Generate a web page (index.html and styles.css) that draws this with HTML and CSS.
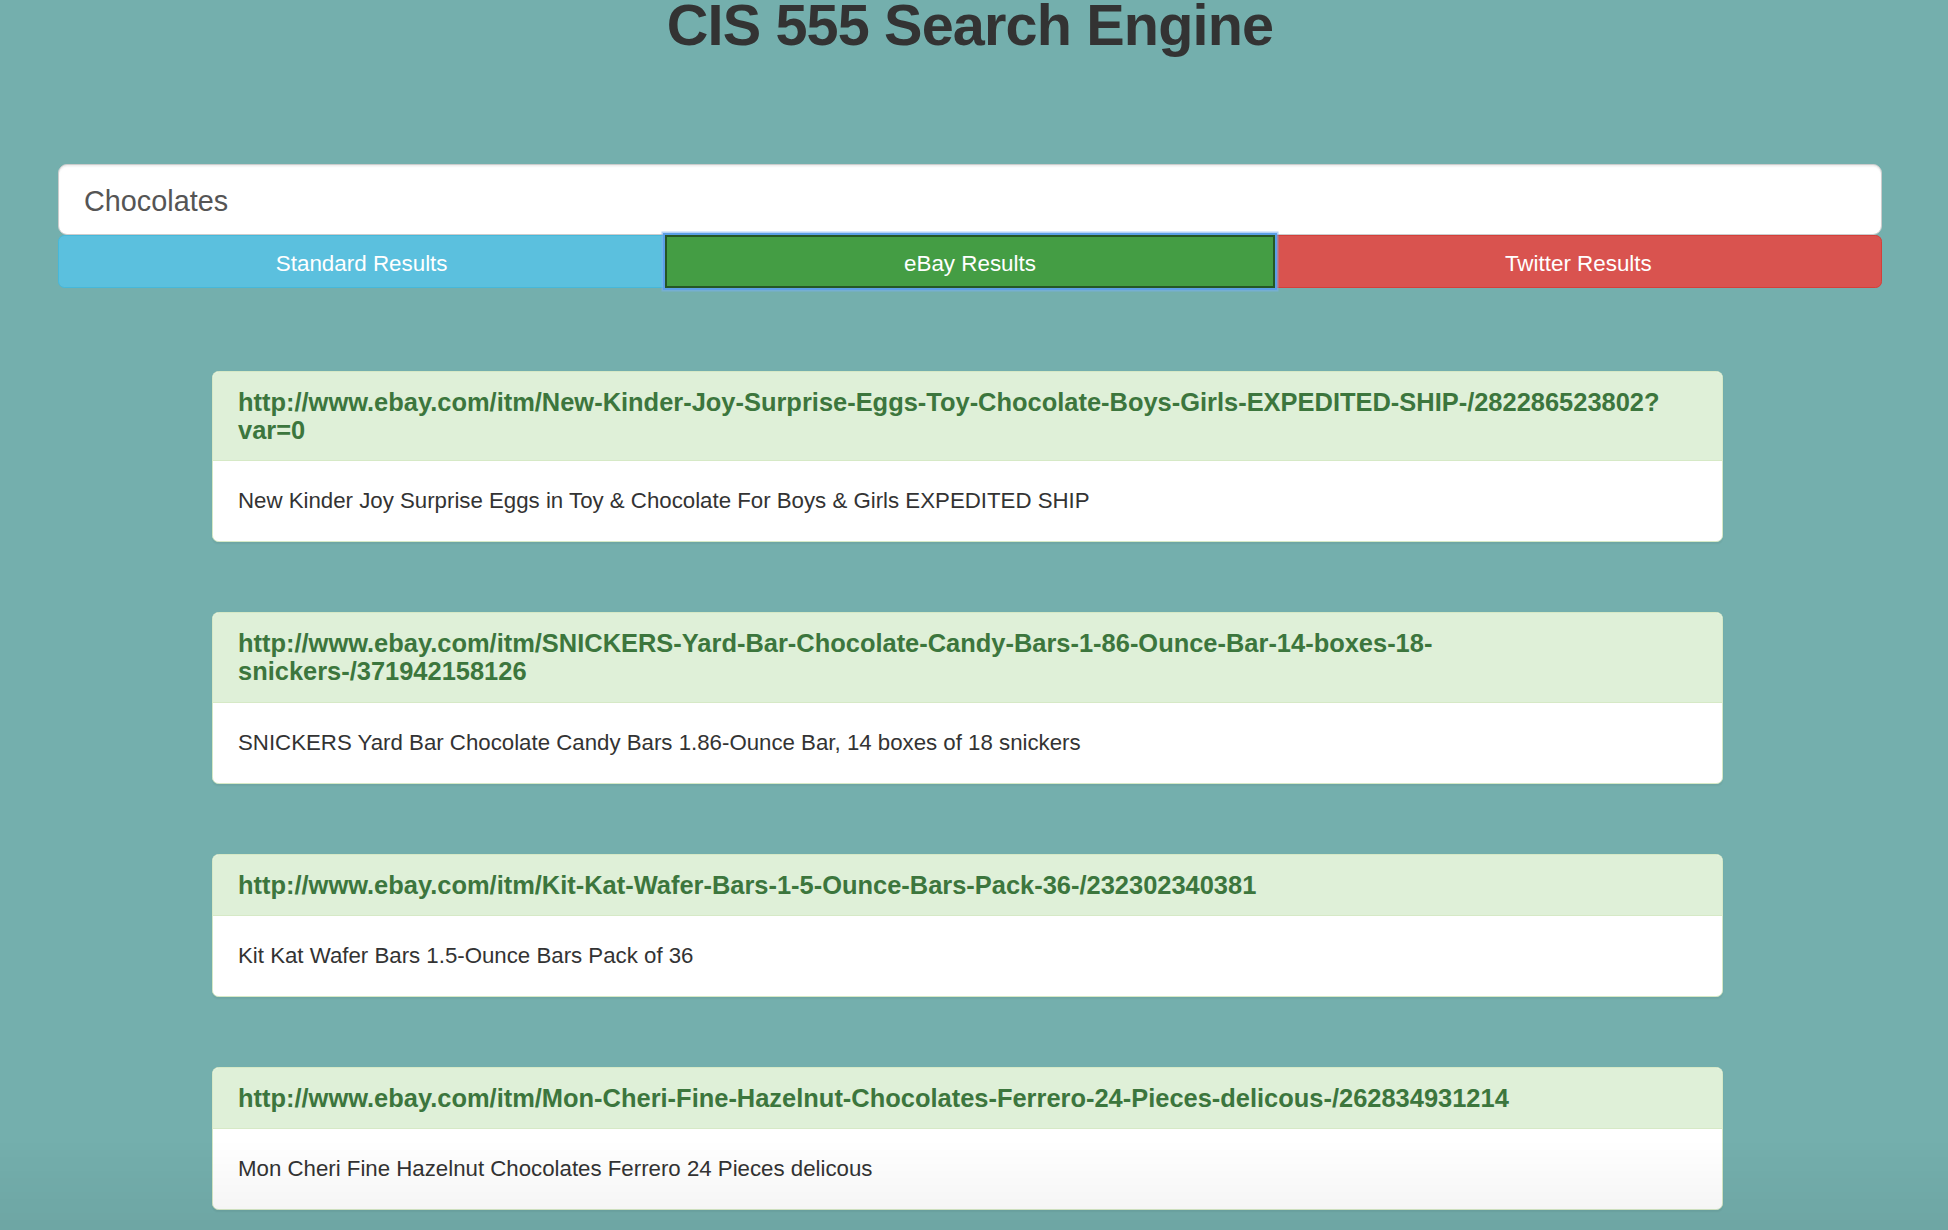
FILE: index.html
```html
<!DOCTYPE html>
<html lang="en">
<head>
<meta charset="utf-8">
<title>CIS 555 Search Engine</title>
<link rel="stylesheet" href="styles.css">
</head>
<body>
<div class="page">
  <h1 class="title">CIS 555 Search Engine</h1>
  <form class="search">
    <input class="search-input" type="text" value="Chocolates">
    <div class="btn-group">
      <button type="button" class="btn btn-info">Standard Results</button>
      <button type="button" class="btn btn-success">eBay Results</button>
      <button type="button" class="btn btn-danger">Twitter Results</button>
    </div>
  </form>
  <div class="results">
    <div class="panel">
      <div class="panel-heading">http://www.ebay.com/itm/New-Kinder-Joy-Surprise-Eggs-Toy-Chocolate-Boys-Girls-EXPEDITED-SHIP-/282286523802?<br>var=0</div>
      <div class="panel-body">New Kinder Joy Surprise Eggs in Toy &amp; Chocolate For Boys &amp; Girls EXPEDITED SHIP</div>
    </div>
    <div class="panel">
      <div class="panel-heading">http://www.ebay.com/itm/SNICKERS-Yard-Bar-Chocolate-Candy-Bars-1-86-Ounce-Bar-14-boxes-18-<br>snickers-/371942158126</div>
      <div class="panel-body">SNICKERS Yard Bar Chocolate Candy Bars 1.86-Ounce Bar, 14 boxes of 18 snickers</div>
    </div>
    <div class="panel">
      <div class="panel-heading">http://www.ebay.com/itm/Kit-Kat-Wafer-Bars-1-5-Ounce-Bars-Pack-36-/232302340381</div>
      <div class="panel-body">Kit Kat Wafer Bars 1.5-Ounce Bars Pack of 36</div>
    </div>
    <div class="panel">
      <div class="panel-heading">http://www.ebay.com/itm/Mon-Cheri-Fine-Hazelnut-Chocolates-Ferrero-24-Pieces-delicous-/262834931214</div>
      <div class="panel-body">Mon Cheri Fine Hazelnut Chocolates Ferrero 24 Pieces delicous</div>
    </div>
  </div>
</div>
<div class="bottom-shade"></div>
</body>
</html>
```

FILE: styles.css
```css
html, body {
  margin: 0;
  padding: 0;
}

body {
  background: #74afad;
  font-family: "Liberation Sans", Arial, Helvetica, sans-serif;
  color: #333;
  overflow: hidden;
}

.page {
  width: 1824px;
  margin-left: 58px;
}

.title {
  margin: -6px 0 0;
  height: 63px;
  line-height: 63px;
  font-size: 57.6px;
  font-weight: bold;
  letter-spacing: -0.85px;
  text-align: center;
  color: #333;
}

.search {
  margin: 107px 0 0;
  display: flex;
  flex-direction: column;
}

.search-input {
  box-sizing: border-box;
  width: 100%;
  height: 71px;
  margin: 0;
  padding: 4px 25px 0;
  border: 1px solid #ccc;
  border-radius: 9px;
  background: #fff;
  box-shadow: inset 0 1.6px 1.6px rgba(0, 0, 0, 0.075);
  font-family: "Liberation Sans", Arial, Helvetica, sans-serif;
  font-size: 28.8px;
  color: #555;
  outline: none;
}

.btn-group {
  display: flex;
  height: 53px;
}

.btn {
  flex: 1 1 0;
  box-sizing: border-box;
  height: 53px;
  margin: 0;
  padding: 4px 0 0;
  border: 1.6px solid transparent;
  font-family: "Liberation Sans", Arial, Helvetica, sans-serif;
  font-size: 22.4px;
  color: #fff;
  text-align: center;
  border-radius: 0;
  cursor: pointer;
  position: relative;
}

.btn-info {
  background: #5bc0de;
  border-color: #46b8da;
  border-radius: 6.4px 0 0 6.4px;
}

.btn-success {
  background: #449d44;
  border: 2px solid #255625;
  z-index: 2;
  box-shadow: 0 0 0 2px #5c9fe6, 0 0 0 3.5px rgba(120, 175, 240, 0.55);
}

.btn-danger {
  background: #d9534f;
  border-color: #d43f3a;
  border-radius: 0 6.4px 6.4px 0;
}

.results {
  margin: 83px 0 0 154px;
  width: 1511px;
}

.panel {
  margin-bottom: 70px;
  background: #fff;
  border: 1px solid #d6e9c6;
  border-radius: 6.4px;
  box-shadow: 0 1.6px 1.6px rgba(0, 0, 0, 0.05);
  overflow: hidden;
}

.panel-heading {
  padding: 16px 24px 16px 25px;
  background: #dff0d8;
  border-bottom: 1px solid #d6e9c6;
  color: #3c763d;
  font-size: 25.45px;
  font-weight: bold;
  line-height: 28.16px;
}

.panel-body {
  padding: 24px 24px 24px 25px;
  font-size: 22.25px;
  line-height: 32px;
  color: #333;
}

.bottom-shade {
  position: fixed;
  left: 0;
  right: 0;
  bottom: 0;
  height: 90px;
  background: linear-gradient(to bottom, rgba(0, 0, 0, 0), rgba(0, 0, 0, 0.05));
  pointer-events: none;
}
```
